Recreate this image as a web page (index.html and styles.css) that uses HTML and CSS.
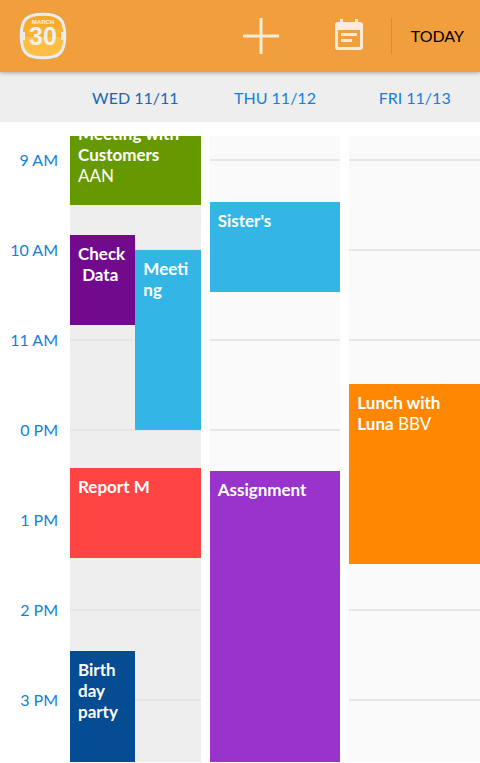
FILE: index.html
```html
<!DOCTYPE html>
<html lang="en">
<head>
  <meta charset="UTF-8">
  <meta name="viewport" content="width=device-width, initial-scale=1.0">
  <title>Calendar</title>
  <link rel="stylesheet" href="styles.css">
</head>
<body>

  <!-- Top bar -->
  <header class="toolbar">
    <svg class="logo" viewBox="0 0 48 48" role="img" aria-label="March 30">
      <defs>
        <linearGradient id="page" x1="0" y1="0" x2="0" y2="1">
          <stop offset="0" stop-color="#f5a624"/>
          <stop offset="0.5" stop-color="#fab538"/>
          <stop offset="0.5" stop-color="#ffbe42"/>
          <stop offset="1" stop-color="#ffc04a"/>
        </linearGradient>
      </defs>
      <path d="M24 1.500C41 1.500 46.500 7 46.500 24S41 46.500 24 46.500 1.500 41 1.500 24 7 1.500 24 1.500z" fill="url(#page)" stroke="#d3a468" stroke-width="2.500"/>
      <path d="M24 2.200C40.500 2.200 45.800 7.500 45.800 24S40.500 45.800 24 45.800 2.200 40.500 2.200 24 7.500 2.200 24 2.200z" fill="none" stroke="#ececea" stroke-width="3"/>
      <path d="M4 24h40" stroke="#dea036" stroke-width="0.600"/>
      <path d="M2 20h4v8H2zM42 20h4v8h-4z" fill="#ececea"/>
      <text class="logo-month" x="24" y="12" text-anchor="middle">MARCH</text>
      <text class="logo-day" x="24" y="33" text-anchor="middle">30</text>
    </svg>
    <div class="actions">
      <button class="icon-btn" type="button" aria-label="Add event">
        <svg width="36" height="36" viewBox="0 0 36 36"><path d="M18 0v36M0 18h36" stroke="#fdebd8" stroke-width="3"/></svg>
      </button>
      <button class="icon-btn" type="button" aria-label="Agenda">
        <svg width="28" height="36" viewBox="0 0 28 36">
          <path fill="#fdebd8" fill-rule="evenodd" d="M5 1h3v3h12V1h3v3h2a3 3 0 0 1 3 3v22a3 3 0 0 1-3 3H3a3 3 0 0 1-3-3V7a3 3 0 0 1 3-3h2zM3 12v16a1 1 0 0 0 1 1h20a1 1 0 0 0 1-1V12zM6 15h16v3H6zM6 21h11v3H6z"/>
        </svg>
      </button>
      <button class="today-btn" type="button">TODAY</button>
    </div>
  </header>

  <!-- Day names -->
  <div class="days-header">
    <div class="day-name current">WED 11/11</div>
    <div class="day-name">THU 11/12</div>
    <div class="day-name">FRI 11/13</div>
  </div>

  <!-- Timetable, scrolled to 8:44. One grid row is 1px, one hour is 90px -->
  <main class="timetable">
    <div class="hours">
      <div class="hour">9 AM</div>
      <div class="hour">10 AM</div>
      <div class="hour">11 AM</div>
      <div class="hour">0 PM</div>
      <div class="hour">1 PM</div>
      <div class="hour">2 PM</div>
      <div class="hour">3 PM</div>
    </div>

    <div class="days">
      <section class="day current split">
        <div class="event green wide" style="grid-row: 1 / 91"><b>Meeting with<br>Customers</b><br>AAN</div>
        <div class="event purple left" style="grid-row: 121 / 211"><b>Check<br>&nbsp;Data</b></div>
        <div class="event blue right" style="grid-row: 136 / 316"><b>Meeti<br>ng</b></div>
        <div class="event red wide" style="grid-row: 354 / 444"><b>Report M</b></div>
        <div class="event navy left" style="grid-row: 537 / 717"><b>Birth<br>day<br>party</b></div>
      </section>

      <section class="day">
        <div class="event blue" style="grid-row: 88 / 178"><b>Sister's</b></div>
        <div class="event violet" style="grid-row: 357 / 717"><b>Assignment</b></div>
      </section>

      <section class="day">
        <div class="event orange" style="grid-row: 270 / 450"><b>Lunch with<br>Luna</b> BBV</div>
      </section>
    </div>
  </main>

</body>
</html>
```

FILE: styles.css
```css
* {
  box-sizing: border-box;
}

body {
  display: flex;
  flex-direction: column;
  height: 100vh;
  margin: 0;
  overflow: hidden;
  background: #fff;
  font-family: Lato, "Liberation Sans", sans-serif;
  font-size: 17px;
  line-height: 21px;
}

/* Top bar */
.toolbar {
  display: flex;
  align-items: center;
  justify-content: space-between;
  height: 72px;
  flex: none;
  padding: 0 16px 0 19px;
  background: #f19e3c;
  border-bottom: 1px solid #b9a98c;
  box-shadow: 0 1px 4px rgba(0, 0, 0, 0.3);
  z-index: 1;
}

.logo {
  width: 48px;
  height: 48px;
}

.logo-month {
  font: bold 6px "Liberation Sans", sans-serif;
  fill: #fff3d8;
}

.logo-day {
  font: bold 25px "Liberation Sans", sans-serif;
  fill: #f1f1ee;
}

.actions {
  display: flex;
  align-items: center;
}

.icon-btn {
  display: flex;
  margin-right: 28px;
  padding: 0;
  border: none;
  background: none;
  cursor: pointer;
}

.icon-btn:first-child {
  margin-right: 56px;
}

.today-btn {
  height: 36px;
  padding: 0 0 0 19px;
  border: none;
  border-left: 1px solid #d68c35;
  background: none;
  color: #000;
  font-family: inherit;
  font-size: 16px;
  cursor: pointer;
}

/* Day names */
.days-header,
.days {
  display: grid;
  grid-template-columns: repeat(3, 1fr);
  column-gap: 9px;
}

.days-header {
  height: 50px;
  flex: none;
  align-items: center;
  padding-left: 70px;
  background: #eee;
}

.day-name {
  text-align: center;
  color: #147fdc;
  font-size: 16px;
}

.day-name.current {
  color: #1767b1;
}

/* Timetable */
.timetable {
  display: flex;
  flex: 1;
  min-height: 0;
  margin: 14px 0 1px;
  overflow: hidden;
}

.hours,
.days {
  margin-top: -21px;
}

.hours {
  width: 70px;
  flex: none;
  padding-right: 12px;
  text-align: right;
  color: #147fdc;
  font-size: 16px;
}

.hour {
  line-height: 90px;
}

.days {
  flex: 1;
}

.day {
  display: grid;
  grid-auto-rows: 1px;
  background: #fafafa repeating-linear-gradient(transparent 0 44px, #e6e6e6 44px 46px, transparent 46px 90px);
}

.day.current {
  background-color: #eee;
}

.day.split {
  grid-template-columns: 1fr 1fr;
}

.event {
  min-width: 0;
  padding: 8px;
  color: #fff;
  white-space: nowrap;
}

.wide {
  grid-column: 1 / 3;
}

.left {
  grid-column: 1;
}

.right {
  grid-column: 2;
}

.green {
  background: #690;
}

.purple {
  background: #720a8e;
}

.blue {
  background: #33b5e5;
}

.red {
  background: #f44;
}

.navy {
  background: #054c92;
}

.violet {
  background: #93c;
}

.orange {
  background: #f80;
}
```
